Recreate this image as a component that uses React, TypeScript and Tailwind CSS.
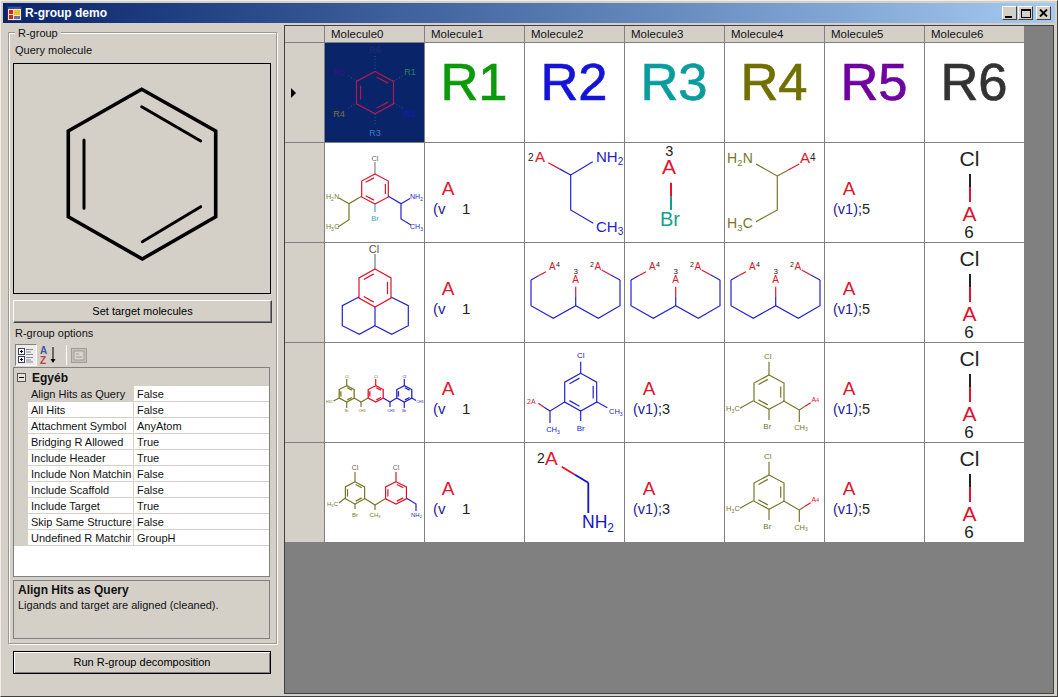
import React from 'react'

const RED = '#e0142e'
const BLUE = '#2222cc'
const OLIVE = '#77772a'
const TEAL = '#12a090'
const DARK = '#222222'

type Pt = [number, number]

const Line = ({ p, c, w = 1.2, dash }: { p: Pt[]; c: string; w?: number; dash?: string }) => (
  <polyline points={p.map((q) => q.join(',')).join(' ')} fill="none" stroke={c} strokeWidth={w} strokeDasharray={dash} />
)

const Bond = ({ a, b, c1, c2, w = 1.2 }: { a: Pt; b: Pt; c1: string; c2: string; w?: number }) => {
  const m: Pt = [(a[0] + b[0]) / 2, (a[1] + b[1]) / 2]
  return (
    <>
      <Line p={[a, m]} c={c1} w={w} />
      <Line p={[m, b]} c={c2} w={w} />
    </>
  )
}

const T = ({ x, y, s, c, a = 'start', children }: { x: number; y: number; s: number; c: string; a?: 'start' | 'middle' | 'end'; children: React.ReactNode }) => (
  <text x={x} y={y} fontSize={s} fill={c} textAnchor={a} fontFamily="'Liberation Sans', Arial, sans-serif">
    {children}
  </text>
)

const Sub = ({ s, children }: { s: number; children: React.ReactNode }) => (
  <>
    <tspan dy={s * 0.3} fontSize={s}>{children}</tspan>
    <tspan dy={-s * 0.3} fontSize={1}>{' '}</tspan>
  </>
)

// flat six ring from centre and size, order: top, rt, rb, bottom, lb, lt
const hex = (cx: number, top: number, bottom: number, half: number): Pt[] => {
  const h = bottom - top
  return [
    [cx, top],
    [cx + half, top + h * 0.235],
    [cx + half, bottom - h * 0.235],
    [cx, bottom],
    [cx - half, bottom - h * 0.235],
    [cx - half, top + h * 0.235],
  ]
}

const Ring = ({ p, c, w = 1.2, start = 0 }: { p: Pt[]; c: string; w?: number; start?: number }) => {
  const cx = p.reduce((t, q) => t + q[0], 0) / 6
  const cy = p.reduce((t, q) => t + q[1], 0) / 6
  const inner = (q: Pt): Pt => [cx + (q[0] - cx) * 0.78, cy + (q[1] - cy) * 0.78]
  return (
    <>
      <polygon points={p.map((q) => q.join(',')).join(' ')} fill="none" stroke={c} strokeWidth={w} />
      {[start, start + 2, start + 4].map((i) => {
        const a = inner(p[i % 6])
        const b = inner(p[(i + 1) % 6])
        const s: Pt = [a[0] + (b[0] - a[0]) * 0.1, a[1] + (b[1] - a[1]) * 0.1]
        const e: Pt = [a[0] + (b[0] - a[0]) * 0.9, a[1] + (b[1] - a[1]) * 0.9]
        return <Line key={i} p={[s, e]} c={c} w={w} />
      })}
    </>
  )
}

const Mol = ({ children }: { children: React.ReactNode }) => (
  <svg width="99" height="99" viewBox="0 0 99 99" className="block overflow-hidden">
    {children}
  </svg>
)

const Big = ({ label, color }: { label: string; color: string }) => (
  <Mol>
    <text x={49} y={57} fontSize={52.5} fill={color} stroke={color} strokeWidth={0.7} textAnchor="middle" fontFamily="'Liberation Sans', Arial, sans-serif">
      {label}
    </text>
  </Mol>
)

const Query = () => (
  <div className="w-full h-full bg-[#0a246a]">
    <Mol>
      <Line p={[[50, 13], [50, 28]]} c="#3a4f90" w={1} dash="1 2" />
      <Line p={[[50, 71], [50, 82]]} c="#3a4f90" w={1} dash="1 2" />
      <Line p={[[69, 38], [79, 32]]} c="#3a4f90" w={1} dash="1 2" />
      <Line p={[[32, 38], [22, 32]]} c="#3a4f90" w={1} dash="1 2" />
      <Line p={[[32, 60], [22, 66]]} c="#3a4f90" w={1} dash="1 2" />
      <Line p={[[69, 60], [79, 66]]} c="#3a4f90" w={1} dash="1 2" />
      <Ring p={hex(50, 28.5, 70.7, 18.5)} c="#b01c50" start={0} />
      <T x={50} y={10} s={9} c="#1c3070" a="middle">R6</T>
      <T x={85} y={32} s={9} c="#1f8a5a" a="middle">R1</T>
      <T x={14} y={32} s={9} c="#3c1080" a="middle">R5</T>
      <T x={14} y={74} s={9} c="#7a7440" a="middle">R4</T>
      <T x={85} y={74} s={9} c="#1414c8" a="middle">R2</T>
      <T x={50} y={93} s={9} c="#2a80c0" a="middle">R3</T>
    </Mol>
  </div>
)

const Row1Mol = () => (
  <Mol>
    <Line p={[[50, 19], [50, 31]]} c="#888888" />
    <Ring p={hex(50, 31, 61, 13.3)} c={RED} start={5} />
    <Line p={[[36.7, 53.3], [24, 60.7], [24, 76.7], [13, 84]]} c={OLIVE} />
    <Line p={[[24, 60.7], [14, 55]]} c={OLIVE} />
    <Line p={[[63.3, 53.3], [76, 60.7], [76, 76], [86, 82]]} c={BLUE} />
    <Line p={[[76, 60.7], [85, 55.5]]} c={BLUE} />
    <Line p={[[50, 61], [50, 69]]} c="#50a0c0" />
    <T x={50} y={18} s={7.5} c="#666666" a="middle">Cl</T>
    <T x={50} y={78} s={7.5} c="#50a0c0" a="middle">Br</T>
    <T x={1} y={56} s={7} c={OLIVE}>H<Sub s={5}>2</Sub>N</T>
    <T x={1} y={86} s={7} c={OLIVE}>H<Sub s={5}>3</Sub>C</T>
    <T x={85} y={56} s={7} c={BLUE}>NH<Sub s={5}>2</Sub></T>
    <T x={85} y={86} s={7} c={BLUE}>CH<Sub s={5}>3</Sub></T>
  </Mol>
)

const Row2Mol = () => (
  <Mol>
    <Line p={[[50, 11], [50, 26]]} c="#777777" />
    <Line p={[[34, 54], [17.3, 62.7], [17.3, 82.7], [34.3, 91.3], [50, 82.7], [66.7, 91.3], [83.3, 82.7], [83.3, 62.7], [66, 54]]} c={BLUE} />
    <Line p={[[50, 64], [50, 82.7]]} c={BLUE} />
    <Ring p={hex(50, 26, 64, 16)} c={RED} start={5} />
    <T x={49} y={10} s={11} c="#555555" a="middle">Cl</T>
  </Mol>
)

const SmallRing = ({ cx, c }: { cx: number; c: string }) => <Ring p={hex(cx, 42.7, 59, 7.5)} c={c} w={1.3} />

const Row3Mol = () => (
  <Mol>
    <Line p={[[21.7, 36], [21.7, 42.7]]} c={OLIVE} />
    <Line p={[[21.7, 59], [21.7, 65]]} c={OLIVE} />
    <Line p={[[14.2, 55], [8.5, 58]]} c={OLIVE} />
    <Line p={[[29.2, 55], [36, 59], [43.2, 55]]} c={OLIVE} />
    <Line p={[[36, 59], [36, 64]]} c={OLIVE} />
    <Line p={[[50.7, 36], [50.7, 42.7]]} c={RED} />
    <Line p={[[58.2, 55], [65, 59], [71.8, 55]]} c={BLUE} />
    <Line p={[[65, 59], [65, 64]]} c={BLUE} />
    <Line p={[[79.3, 36], [79.3, 42.7]]} c={BLUE} />
    <Line p={[[79.3, 59], [79.3, 65]]} c={BLUE} />
    <Line p={[[86.8, 55], [91, 57.5]]} c={BLUE} />
    <SmallRing cx={21.7} c={OLIVE} />
    <SmallRing cx={50.7} c={RED} />
    <SmallRing cx={79.3} c={BLUE} />
    <T x={21.7} y={35} s={4} c={OLIVE} a="middle">Cl</T>
    <T x={21.7} y={69} s={4} c={OLIVE} a="middle">Br</T>
    <T x={1} y={60} s={3.5} c={OLIVE}>H3C</T>
    <T x={37} y={69} s={3.5} c={OLIVE} a="middle">CH3</T>
    <T x={50.7} y={35} s={4} c="#666666" a="middle">Cl</T>
    <T x={66} y={69} s={3.5} c={BLUE} a="middle">CH3</T>
    <T x={79.3} y={35} s={4} c={BLUE} a="middle">Cl</T>
    <T x={79.3} y={69} s={4} c={BLUE} a="middle">Br</T>
    <T x={91.5} y={60} s={3.5} c={BLUE}>CH3</T>
  </Mol>
)

const Row4Mol = () => (
  <Mol>
    <Line p={[[30, 29], [30, 38.7]]} c={OLIVE} />
    <Line p={[[30, 61], [30, 66]]} c={OLIVE} />
    <Line p={[[20, 55.3], [14, 60]]} c={OLIVE} />
    <Line p={[[39.3, 55.3], [50, 62], [61, 55.3]]} c={OLIVE} />
    <Line p={[[50, 62], [50, 67]]} c={OLIVE} />
    <Line p={[[71, 29], [71, 38.7]]} c={RED} />
    <Line p={[[81.7, 55.3], [91, 61], [91, 68]]} c={BLUE} />
    <Ring p={hex(30, 38.7, 61, 9.6)} c={OLIVE} />
    <Ring p={hex(71, 38.7, 61, 10.4)} c={RED} />
    <T x={30} y={27} s={7} c="#66663a" a="middle">Cl</T>
    <T x={71} y={27} s={7} c="#666666" a="middle">Cl</T>
    <T x={30} y={74} s={6} c={OLIVE} a="middle">Br</T>
    <T x={2} y={63} s={6} c={OLIVE}>H<Sub s={4}>3</Sub>C</T>
    <T x={50} y={74} s={6} c={OLIVE} a="middle">CH<Sub s={4}>3</Sub></T>
    <T x={86} y={74} s={6} c={BLUE}>NH<Sub s={4}>2</Sub></T>
  </Mol>
)

const Attach = ({ n }: { n: string }) => (
  <Mol>
    <T x={23} y={52} s={19} c={RED} a="middle">A</T>
    <T x={8} y={70.5} s={15} c="#22229a">(v</T>
    <T x={37} y={70.5} s={15} c={DARK}>{n}</T>
  </Mol>
)

const AttachFull = ({ n }: { n: string }) => (
  <Mol>
    <T x={24} y={52} s={19} c={RED} a="middle">A</T>
    <T x={8} y={70.5} s={14.5} c="#22229a">
      (v1)<tspan fill={DARK}>;{n}</tspan>
    </T>
  </Mol>
)

const Chlorine = () => (
  <Mol>
    <T x={44.5} y={23} s={21} c={DARK} a="middle">Cl</T>
    <Line p={[[45, 31], [45, 44]]} c={DARK} w={2} />
    <Line p={[[45, 44], [45, 59]]} c={RED} w={2} />
    <T x={44.5} y={78} s={21} c={RED} a="middle">A</T>
    <T x={44} y={95} s={17} c={DARK} a="middle">6</T>
  </Mol>
)

const AmineLeft = () => (
  <Mol>
    <Bond a={[23.3, 19.7]} b={[45.7, 32]} c1={RED} c2={BLUE} />
    <Line p={[[67.7, 18.7], [45.7, 32], [45.7, 67], [68.3, 80.3]]} c={BLUE} />
    <T x={3} y={18} s={10} c={DARK}>2</T>
    <T x={10} y={18.7} s={15} c={RED}>A</T>
    <T x={71} y={18.7} s={15} c={BLUE}>NH<Sub s={10}>2</Sub></T>
    <T x={71} y={89} s={15} c={BLUE}>CH<Sub s={10}>3</Sub></T>
  </Mol>
)

const Bromine = () => (
  <Mol>
    <T x={44.3} y={12.5} s={14.5} c={DARK} a="middle">3</T>
    <T x={44} y={31} s={21} c={RED} a="middle">A</T>
    <Line p={[[46, 39.7], [46, 53.7]]} c={RED} w={2} />
    <Line p={[[46, 53.7], [46, 67]]} c={TEAL} w={2} />
    <T x={45} y={83} s={20} c={TEAL} a="middle">Br</T>
  </Mol>
)

const AmineRight = () => (
  <Mol>
    <Line p={[[31, 21], [52.3, 33], [52.3, 67], [31, 78.7]]} c={OLIVE} />
    <Bond a={[52.3, 33]} b={[74.3, 21]} c1={OLIVE} c2={RED} />
    <T x={2} y={20.3} s={14} c={OLIVE}>H<Sub s={9.5}>2</Sub>N</T>
    <T x={2} y={85} s={14} c={OLIVE}>H<Sub s={9.5}>3</Sub>C</T>
    <T x={75} y={20.3} s={15} c={RED}>A</T>
    <T x={85} y={17.5} s={10} c={DARK}>4</T>
  </Mol>
)

const Bicycle = () => (
  <Mol>
    <Bond a={[6, 37]} b={[21, 28.7]} c1={BLUE} c2={RED} />
    <Line p={[[6, 37], [6, 62.7], [28.3, 75.3], [50.7, 62.7], [73.3, 75.3], [95, 62.7], [95, 37]]} c={BLUE} />
    <Bond a={[95, 37]} b={[76.7, 27]} c1={BLUE} c2={RED} />
    <Bond a={[50.7, 62.7]} b={[50.7, 43.7]} c1={BLUE} c2={RED} />
    <T x={24} y={27} s={10} c={RED}>A</T>
    <T x={31} y={24} s={7} c={DARK}>4</T>
    <T x={50.7} y={30.5} s={8} c={DARK} a="middle">3</T>
    <T x={50.7} y={40} s={10} c={RED} a="middle">A</T>
    <T x={65} y={24} s={7} c={DARK}>2</T>
    <T x={69.5} y={27} s={10} c={RED}>A</T>
  </Mol>
)

const ArylBlue = () => (
  <Mol>
    <Line p={[[55.7, 18.7], [55.7, 30.3]]} c={BLUE} />
    <Line p={[[71.7, 58.7], [82.3, 64.7]]} c={BLUE} />
    <Line p={[[55.7, 68], [55.7, 78]]} c={BLUE} />
    <Line p={[[40, 58.7], [25, 68], [25, 80]]} c={BLUE} />
    <Bond a={[25, 68]} b={[13.3, 60.3]} c1={BLUE} c2={RED} />
    <Ring p={hex(55.7, 30.3, 68, 16)} c={BLUE} start={1} />
    <T x={55.7} y={15} s={8} c={BLUE} a="middle">Cl</T>
    <T x={84} y={71} s={7.5} c={BLUE}>CH<Sub s={5}>3</Sub></T>
    <T x={55.7} y={88} s={8} c={BLUE} a="middle">Br</T>
    <T x={28} y={89} s={7.5} c={BLUE} a="middle">CH<Sub s={5}>3</Sub></T>
    <T x={2} y={61} s={7} c={RED}>2A</T>
  </Mol>
)

const ArylOlive = () => (
  <Mol>
    <Line p={[[44, 18.7], [44, 32]]} c={OLIVE} />
    <Line p={[[28.3, 57.7], [15, 65.3]]} c={OLIVE} />
    <Line p={[[44, 66.3], [44, 77]]} c={OLIVE} />
    <Line p={[[58.3, 57.7], [74.3, 67], [74.3, 79]]} c={OLIVE} />
    <Bond a={[74.3, 67]} b={[85.7, 59.7]} c1={OLIVE} c2={RED} />
    <Ring p={hex(44, 32, 66.3, 15)} c={OLIVE} start={1} />
    <T x={42.7} y={15.5} s={8} c={OLIVE} a="middle">Cl</T>
    <T x={1} y={68} s={7.5} c={OLIVE}>H<Sub s={5}>3</Sub>C</T>
    <T x={42.3} y={85.5} s={8} c={OLIVE} a="middle">Br</T>
    <T x={76} y={86.5} s={7.5} c={OLIVE} a="middle">CH<Sub s={5}>3</Sub></T>
    <T x={86.5} y={58.5} s={7} c={RED}>A<tspan fontSize={5}>4</tspan></T>
  </Mol>
)

const ShortAmine = () => (
  <Mol>
    <Bond a={[36.7, 23.7]} b={[63.3, 39.7]} c1={RED} c2="#1414c0" w={1.8} />
    <Line p={[[63.3, 39.7], [63.3, 70]]} c="#1414c0" w={1.8} />
    <T x={12} y={20} s={14} c={DARK}>2</T>
    <T x={20} y={22} s={19} c={RED}>A</T>
    <T x={57} y={85} s={17.5} c="#1414c0">NH<Sub s={12}>2</Sub></T>
  </Mol>
)

const headers = ['Molecule0', 'Molecule1', 'Molecule2', 'Molecule3', 'Molecule4', 'Molecule5', 'Molecule6']

const rows: React.ReactNode[][] = [
  [
    <Query />,
    <Big label="R1" color="#0a9a0a" />,
    <Big label="R2" color="#1414d8" />,
    <Big label="R3" color="#0a9c9c" />,
    <Big label="R4" color="#707000" />,
    <Big label="R5" color="#7000a0" />,
    <Big label="R6" color="#333333" />,
  ],
  [<Row1Mol />, <Attach n="1" />, <AmineLeft />, <Bromine />, <AmineRight />, <AttachFull n="5" />, <Chlorine />],
  [<Row2Mol />, <Attach n="1" />, <Bicycle />, <Bicycle />, <Bicycle />, <AttachFull n="5" />, <Chlorine />],
  [<Row3Mol />, <Attach n="1" />, <ArylBlue />, <AttachFull n="3" />, <ArylOlive />, <AttachFull n="5" />, <Chlorine />],
  [<Row4Mol />, <Attach n="1" />, <ShortAmine />, <AttachFull n="3" />, <ArylOlive />, <AttachFull n="5" />, <Chlorine />],
]

const props = [
  ['Align Hits as Query', 'False'],
  ['All Hits', 'False'],
  ['Attachment Symbol', 'AnyAtom'],
  ['Bridging R Allowed', 'True'],
  ['Include Header', 'True'],
  ['Include Non Matchin', 'False'],
  ['Include Scaffold', 'False'],
  ['Include Target', 'True'],
  ['Skip Same Structure', 'False'],
  ['Undefined R Matchir', 'GroupH'],
]

const AppIcon = () => (
  <svg width="15" height="15" viewBox="0 0 15 15" className="shrink-0">
    <rect x="0.5" y="0.5" width="14" height="14" fill="#f4e8c0" stroke="#203070" />
    <rect x="1" y="1" width="13" height="2" fill="#2a50b0" />
    <rect x="2" y="4" width="4" height="4" fill="#d82020" />
    <rect x="2" y="9" width="4" height="4" fill="#d82020" />
    <rect x="7" y="4" width="6" height="5" fill="#f0c020" />
    <rect x="7" y="10" width="6" height="3" fill="#6070c0" />
  </svg>
)

const CaptionButton = ({ children, gap = false }: { children: React.ReactNode; gap?: boolean }) => (
  <div className={`w-[15px] h-[14px] bg-[#d4d0c8] border border-t-white border-l-white border-b-[#404040] border-r-[#404040] flex items-center justify-center ${gap ? 'ml-[3px]' : 'ml-px'}`}>
    {children}
  </div>
)

const Button = ({ label, strong = false, className = '' }: { label: string; strong?: boolean; className?: string }) => (
  <button
    className={`block h-[23px] bg-[#d4d0c8] text-[11px] text-black border ${strong ? 'border-black shadow-[inset_1px_1px_0_#fff,inset_-1px_-1px_0_#808080]' : 'border-t-white border-l-white border-b-[#404040] border-r-[#404040] shadow-[inset_-1px_-1px_0_#808080]'} ${className}`}
  >
    {label}
  </button>
)

const App = () => {
  return (
    <div className="w-[1058px] h-[697px] overflow-hidden border border-t-[#f0eee8] border-l-[#f0eee8] border-r-[#404040] border-b-[#404040]">
      <div
        className="w-full h-full bg-[#d4d0c8] border-2 border-[#d4d0c8] flex flex-col text-[11px] text-[#111111]"
        style={{ fontFamily: "'Liberation Sans', Arial, sans-serif" }}
      >
        <div className="h-[20px] shrink-0 bg-gradient-to-r from-[#0a246a] to-[#a6caf0] flex items-center pl-[4px] pr-[4px]">
          <AppIcon />
          <span className="ml-[3px] text-white font-bold text-[12px]">R-group demo</span>
          <div className="ml-auto flex">
            <CaptionButton>
              <div className="w-[7px] h-[2px] bg-black mt-[7px] mr-[2px]" />
            </CaptionButton>
            <CaptionButton>
              <div className="w-[10px] h-[9px] border border-black border-t-2" />
            </CaptionButton>
            <CaptionButton gap>
              <svg width="9" height="8" viewBox="0 0 9 8">
                <path d="M1 0.5 L8 7.5 M8 0.5 L1 7.5" stroke="#000" strokeWidth="1.8" />
              </svg>
            </CaptionButton>
          </div>
        </div>

        <div className="flex-1 flex pl-[5px] pt-[2px] min-h-0">
          <div className="w-[269px] shrink-0 pt-[7px]">
            <div className="relative h-[612px] border border-[#9a978f] shadow-[inset_1px_1px_0_#fff,1px_1px_0_#fff] px-[4px] pt-[10px]">
              <span className="absolute left-[6px] top-[-6px] bg-[#d4d0c8] px-[3px] leading-[13px]">R-group</span>
              <div className="h-[14px] leading-[14px] pl-[2px]">Query molecule</div>
              <div className="mt-[6px] h-[231px] w-[258px] border border-black">
                <svg width="256" height="229" viewBox="0 0 256 229" className="block">
                  <polygon points="127.7,25.3 201.7,67 201.7,152.7 128.3,195 54.3,152.7 54.3,67" fill="none" stroke="#000" strokeWidth="3.6" />
                  <path d="M70 76 V144.3 M127.7 42.7 L186.7 77 M128.3 177.7 L186.7 142.7" stroke="#000" strokeWidth="3" fill="none" strokeLinecap="round" />
                </svg>
              </div>
              <Button label="Set target molecules" className="mt-[6px] w-[259px]" />
              <div className="mt-[3px] h-[14px] leading-[14px] pl-[2px]">R-group options</div>
              <div className="mt-[4px] h-[22px] flex items-center pl-[2px]">
                <div className="w-[22px] h-[22px] bg-[#eeece8] border border-t-[#808080] border-l-[#808080] border-b-white border-r-white flex items-center justify-center">
                  <svg width="16" height="16" viewBox="0 0 16 16">
                    <rect x="0.5" y="1.5" width="6" height="6" fill="#fff" stroke="#404060" />
                    <rect x="0.5" y="9.5" width="6" height="6" fill="#fff" stroke="#404060" />
                    <path d="M2 4.5 H5 M3.5 3 V6 M2 12.5 H5 M3.5 11 V14" stroke="#000" />
                    <path d="M8 2.5 H15 M8 5 H13 M8 7.5 H15 M8 10.5 H15 M8 13 H13 M8 15 H15" stroke="#8a8a9a" />
                  </svg>
                </div>
                <svg width="20" height="20" viewBox="0 0 20 20" className="ml-[2px]">
                  <text x="1" y="9" fontSize="10" fontWeight="700" fill="#4a50a0" fontFamily="'Liberation Sans', sans-serif">A</text>
                  <text x="1" y="19" fontSize="10" fontWeight="700" fill="#c04040" fontFamily="'Liberation Sans', sans-serif">Z</text>
                  <path d="M14 2 V16" stroke="#000" strokeWidth="1" />
                  <path d="M11.5 14 H16.5 L14 18 Z" fill="#000" />
                </svg>
                <div className="ml-[7px] w-px h-[20px] bg-[#a8a59d] border-r border-white" />
                <svg width="16" height="15" viewBox="0 0 16 15" className="ml-[4px]">
                  <rect x="0.5" y="0.5" width="15" height="14" fill="#c4c1b9" stroke="#a09d95" />
                  <rect x="3" y="3" width="10" height="9" fill="#d8d5ce" stroke="#a09d95" />
                  <path d="M5 6 H8 M5 9 H11" stroke="#a09d95" />
                </svg>
              </div>

              <div className="mt-px h-[210px] w-[257px] border border-[#808080] bg-white overflow-hidden">
                <div className="h-[18px] bg-[#d4d0c8] flex items-center pl-[3px] pt-px">
                  <div className="w-[9px] h-[9px] border border-[#555555] bg-[#e6e3dc] flex items-center justify-center">
                    <div className="w-[5px] h-px bg-black" />
                  </div>
                  <span className="ml-[6px] font-bold text-[12px]">Egyéb</span>
                </div>
                {props.map(([name, value], i) => (
                  <div key={name} className="h-[16px] flex">
                    <div className="w-[14px] shrink-0 bg-[#d4d0c8]" />
                    <div className={`w-[106px] shrink-0 overflow-hidden whitespace-nowrap pl-[3px] leading-[16px] border-r border-b border-[#d4d0c8] ${i === 0 ? 'bg-[#d4d0c8]' : ''}`}>
                      {name}
                    </div>
                    <div className="flex-1 pl-[3px] leading-[16px] border-b border-[#d4d0c8]">{value}</div>
                  </div>
                ))}
              </div>

              <div className="mt-[3px] h-[59px] w-[257px] border border-[#808080] px-[4px] pt-[2px] leading-[14px]">
                <div className="font-bold text-[12px] leading-[15px]">Align Hits as Query</div>
                <div>Ligands and target are aligned (cleaned).</div>
              </div>
            </div>
            <Button label="Run R-group decomposition" strong className="mt-[7px] ml-[5px] w-[258px]" />
          </div>

          <div className="ml-[7px] w-[770px] h-[669px] bg-[#808080] border border-[#404040]">
            <div className="grid grid-cols-[40px_repeat(7,100px)] grid-rows-[17px_repeat(5,100px)] w-max">
              <div className="bg-[#d4d0c8] border-r border-b border-[#808080]" />
              {headers.map((h) => (
                <div key={h} className="bg-[#d4d0c8] border-r border-b border-[#808080] pl-[6px] leading-[17px] text-[11.5px]">
                  {h}
                </div>
              ))}
              {rows.map((row, i) => (
                <React.Fragment key={i}>
                  <div className="bg-[#d4d0c8] border-r border-b border-[#808080] flex items-center pl-[6px]">
                    {i === 0 && (
                      <svg width="5" height="10" viewBox="0 0 5 10">
                        <path d="M0 0 L5 5 L0 10 Z" fill="#000" />
                      </svg>
                    )}
                  </div>
                  {row.map((cell, j) => (
                    <div key={j} className={`bg-white border-b border-[#808080] ${i === 4 ? 'border-b-0 h-[99px]' : ''} border-r`}>
                      {cell}
                    </div>
                  ))}
                </React.Fragment>
              ))}
            </div>
          </div>
        </div>
      </div>
    </div>
  )
}

export default App
